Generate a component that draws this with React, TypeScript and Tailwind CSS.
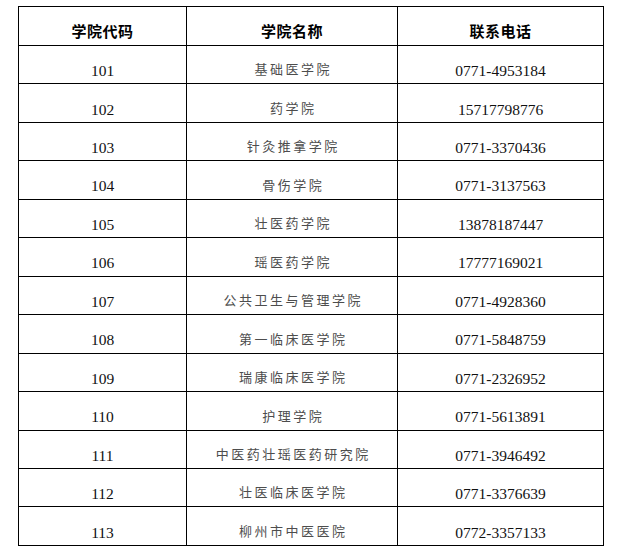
import React from "react";

const rows: [string, string, string][] = [
  ["101", "基础医学院", "0771-4953184"],
  ["102", "药学院", "15717798776"],
  ["103", "针灸推拿学院", "0771-3370436"],
  ["104", "骨伤学院", "0771-3137563"],
  ["105", "壮医药学院", "13878187447"],
  ["106", "瑶医药学院", "17777169021"],
  ["107", "公共卫生与管理学院", "0771-4928360"],
  ["108", "第一临床医学院", "0771-5848759"],
  ["109", "瑞康临床医学院", "0771-2326952"],
  ["110", "护理学院", "0771-5613891"],
  ["111", "中医药壮瑶医药研究院", "0771-3946492"],
  ["112", "壮医临床医学院", "0771-3376639"],
  ["113", "柳州市中医医院", "0772-3357133"],
];

const serif = { fontFamily: '"Liberation Serif", "Times New Roman", serif' };
const cjk = { fontFamily: '"Noto Sans CJK SC", "Noto Sans", sans-serif' };

export default function App() {
  return (
    <div className="w-[635px] h-[546px] bg-white overflow-hidden">
      <div className="ml-[18px] mt-[6px] w-[586px] border-l border-t border-black">
        <div className="grid grid-cols-[168px_211px_206px] h-[39px]">
          {["学院代码", "学院名称", "联系电话"].map((h) => (
            <div
              key={h}
              className="border-r border-b border-black flex items-center justify-center pt-[11px] text-[15px] font-bold text-black tracking-[0.5px]"
              style={cjk}
            >
              {h}
            </div>
          ))}
        </div>
        {rows.map(([code, name, phone]) => (
          <div key={code} className="grid grid-cols-[168px_211px_206px] h-[38.46px]">
            <div
              className="border-r border-b border-black flex items-center justify-center pt-[12px] text-[15.5px] text-[#111]"
              style={serif}
            >
              {code}
            </div>
            <div
              className="border-r border-b border-black flex items-center justify-center pt-[9px] pl-[2.5px] text-[13px] text-[#4d4d4d] tracking-[2.5px]"
              style={cjk}
            >
              {name}
            </div>
            <div
              className="border-r border-b border-black flex items-center justify-center pt-[12px] text-[15.5px] text-[#111]"
              style={serif}
            >
              {phone}
            </div>
          </div>
        ))}
      </div>
    </div>
  );
}
